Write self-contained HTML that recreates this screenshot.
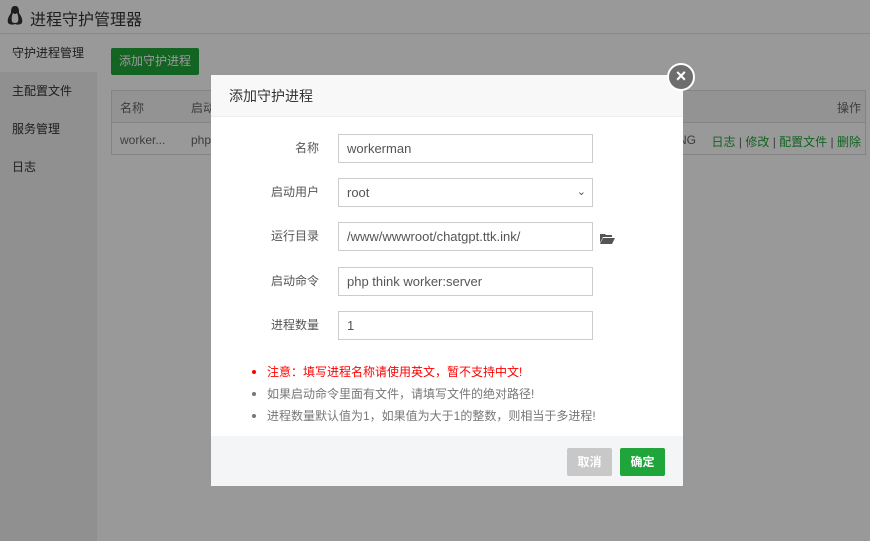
<!DOCTYPE html>
<html><head><meta charset="utf-8"><style>
*{box-sizing:border-box;margin:0;padding:0}
body{width:870px;height:541px;overflow:hidden;position:relative;font-family:"Liberation Sans","Noto Sans CJK SC",sans-serif;font-size:13px;color:#333;background:#fff}
.hdr{position:absolute;left:0;top:0;width:870px;height:34px;background:#fff;border-bottom:1px solid #e6e6e6}
.hdr span{position:absolute;left:30px;top:6px;font-size:16px;color:#333}
.side{position:absolute;left:0;top:34px;width:97px;height:507px;background:#f0f0f0}
.side div{height:38px;line-height:38px;padding-left:12px;font-size:12px;color:#333}
.side div.on{background:#fff}
.main{position:absolute;left:97px;top:34px;right:0;bottom:0;background:#fff}
.btn{position:absolute;left:111px;top:48px;width:88px;height:27px;background:#20a53a;color:#fff;font-size:12px;line-height:27px;text-align:center;border-radius:2px}
.tbl{position:absolute;left:111px;top:90px;width:755px;height:65px;border:1px solid #ddd}
.tbl .h{height:32px;background:#f6f6f6;border-bottom:1px solid #ddd}
.tbl span{position:absolute;font-size:12px;color:#666;white-space:nowrap}
.g{color:#20a53a}
.mask{position:absolute;left:0;top:0;width:870px;height:541px;background:rgba(0,0,0,.4)}
.dlg{position:absolute;left:211px;top:75px;width:472px;height:411px;background:#fff}
.dt{height:42px;background:#f8f8f8;border-bottom:1px solid #eee;font-size:14px;line-height:42px;padding-left:18px;color:#333}
.lab{position:absolute;width:108px;text-align:right;font-size:12px;color:#555}
.inp{position:absolute;left:127px;width:255px;height:29px;border:1px solid #ccc;font-size:13px;line-height:27px;padding-left:8px;color:#555}
ul{position:absolute;left:41px;top:286px;list-style:none;font-size:12px;color:#777}
li{height:22px;line-height:22px;position:relative;padding-left:15px}
li:before{content:"";position:absolute;left:0;top:9px;width:4px;height:4px;border-radius:2px;background:#777}
li.r{color:#f00}li.r:before{background:#f00}
.ft{position:absolute;left:0;top:361px;width:472px;height:50px;background:#f3f5f6}
.b{position:absolute;top:12px;width:45px;height:28px;border-radius:2px;color:#fff;font-size:12px;font-weight:bold;line-height:28px;text-align:center}
.x{position:absolute;left:667px;top:63px;width:28px;height:28px;border-radius:50%;background:#6e6e6e;border:2px solid #fff;color:#fff;font-size:18px;line-height:23px;text-align:center;font-weight:bold}
</style></head><body>
<div class="hdr"><svg style="position:absolute;left:5px;top:5px" width="20" height="22" viewBox="0 0 20 22"><path d="M10 1C6 1 6 5 6 8 4 11 2 14 3 18 5 20 8 20 10 19 12 20 15 20 17 18 18 14 16 11 14 8 14 5 14 1 10 1Z" fill="#333"/><path d="M8 8Q10 10 12 8 14 12 13 17 10 19 7 17 6 12 8 8Z" fill="#fff"/></svg><span>进程守护管理器</span></div>
<div class="side"><div class="on">守护进程管理</div><div>主配置文件</div><div>服务管理</div><div>日志</div></div>
<div class="main"></div>
<div class="btn">添加守护进程</div>
<div class="tbl"><div class="h"></div>
<span style="left:8px;top:8px">名称</span><span style="left:79px;top:8px">启动</span><span style="right:4px;top:8px">操作</span>
<span style="left:8px;top:42px">worker...</span><span style="left:79px;top:42px">php</span>
<span style="left:566px;top:42px">NG</span><span style="right:4px;top:42px"><b class="g" style="font-weight:normal">日志</b> | <b class="g" style="font-weight:normal">修改</b> | <b class="g" style="font-weight:normal">配置文件</b> | <b class="g" style="font-weight:normal">删除</b></span></div>
<div class="mask"></div>
<div class="dlg"><div class="dt">添加守护进程</div>
<div class="lab" style="top:64px">名称</div><div class="inp" style="top:59px">workerman</div>
<div class="lab" style="top:108px">启动用户</div><div class="inp" style="top:103px">root<span style="position:absolute;right:6px;top:0;font-size:11px">&#8964;</span></div>
<div class="lab" style="top:152px">运行目录</div><div class="inp" style="top:147px">/www/wwwroot/chatgpt.ttk.ink/</div>
<svg style="position:absolute;left:389px;top:158px" width="15" height="11" viewBox="0 0 15 11"><path d="M0 1h5l1 1h6v2H3L0 10z M3 5h12l-3 6H0z" fill="#555"/></svg>
<div class="lab" style="top:197px">启动命令</div><div class="inp" style="top:192px">php think worker:server</div>
<div class="lab" style="top:241px">进程数量</div><div class="inp" style="top:236px">1</div>
<ul><li class="r">注意：填写进程名称请使用英文，暂不支持中文!</li><li>如果启动命令里面有文件，请填写文件的绝对路径!</li><li>进程数量默认值为1，如果值为大于1的整数，则相当于多进程!</li></ul>
<div class="ft"><div class="b" style="left:356px;background:#c8c8c8">取消</div><div class="b" style="left:409px;background:#20a53a">确定</div></div>
</div>
<div class="x">×</div>
</body></html>
